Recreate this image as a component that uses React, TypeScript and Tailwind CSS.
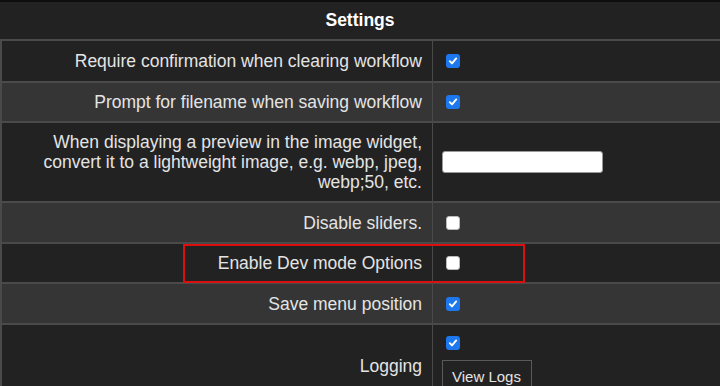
type Row = {
  label: string
  kind: 'check' | 'text' | 'logs'
  on?: boolean
  h: string
  bg: string
}

const rows: Row[] = [
  { label: 'Require confirmation when clearing workflow', kind: 'check', on: true, h: 'h-[42px]', bg: 'bg-[#222222]' },
  { label: 'Prompt for filename when saving workflow', kind: 'check', on: true, h: 'h-[40px]', bg: 'bg-[#353535]' },
  {
    label: 'When displaying a preview in the image widget, convert it to a lightweight image, e.g. webp, jpeg, webp;50, etc.',
    kind: 'text',
    h: 'h-[80px]',
    bg: 'bg-[#222222]',
  },
  { label: 'Disable sliders.', kind: 'check', on: false, h: 'h-[41px]', bg: 'bg-[#353535]' },
  { label: 'Enable Dev mode Options', kind: 'check', on: false, h: 'h-[40px]', bg: 'bg-[#222222]' },
  { label: 'Save menu position', kind: 'check', on: true, h: 'h-[41px]', bg: 'bg-[#353535]' },
  { label: 'Logging', kind: 'logs', on: true, h: 'h-[84px]', bg: 'bg-[#222222]' },
]

const Checkbox = ({ on }: { on?: boolean }) =>
  on ? (
    <span className="flex h-[14px] w-[14px] items-center justify-center rounded-[3px] bg-[#1d78f0]">
      <svg width="10" height="10" viewBox="0 0 10 10" fill="none">
        <path d="M1.8 5.2 L4 7.4 L8.2 2.4" stroke="white" strokeWidth="1.9" strokeLinecap="round" strokeLinejoin="round" />
      </svg>
    </span>
  ) : (
    <span className="block h-[14px] w-[14px] rounded-[3px] border border-[#bbbbbb] bg-white" />
  )

const App = () => {
  return (
    <div className="relative h-[386px] w-[720px] overflow-hidden bg-[#222222] font-['Liberation_Sans',Arial,sans-serif] text-[17.5px] text-[#e4e4e4]">

      {/* Header */}
      <div className="flex h-[41px] items-center justify-center border-t-2 border-b-2 border-t-[#0e0e0e] border-b-[#4a4a4a] font-bold text-white">
        Settings
      </div>

      {/* Rows */}
      {rows.map((row) => (
        <div key={row.label} className={`flex border-b-2 border-l-2 border-[#4a4a4a] ${row.h} ${row.bg}`}>
          <div className="flex w-[431px] shrink-0 items-center justify-end border-r border-[#4a4a4a] pl-[8px] pr-[10px] text-right leading-[20px]">
            {row.label}
          </div>
          {row.kind === 'check' && (
            <div className="flex flex-1 items-center pl-[13px]">
              <Checkbox on={row.on} />
            </div>
          )}
          {row.kind === 'text' && (
            <div className="flex flex-1 items-center pl-[9px]">
              <div className="h-[22px] w-[161px] rounded-[3px] border border-[#9a9a9a] bg-white" />
            </div>
          )}
          {row.kind === 'logs' && (
            <div className="flex flex-1 flex-col items-start pl-[9px] pt-[11px]">
              <div className="ml-[4px]">
                <Checkbox on={row.on} />
              </div>
              <button className="mt-[10px] h-[34px] w-[90px] border border-[#5a5a5a] bg-[#222222] pl-[9px] text-left text-[15px] text-[#e4e4e4]">
                View Logs
              </button>
            </div>
          )}
        </div>
      ))}

      {/* Highlight box */}
      <div className="absolute left-[183px] top-[244px] h-[39px] w-[342px] border-2 border-[#dc0f0f]" />
    </div>
  )
}

export default App
